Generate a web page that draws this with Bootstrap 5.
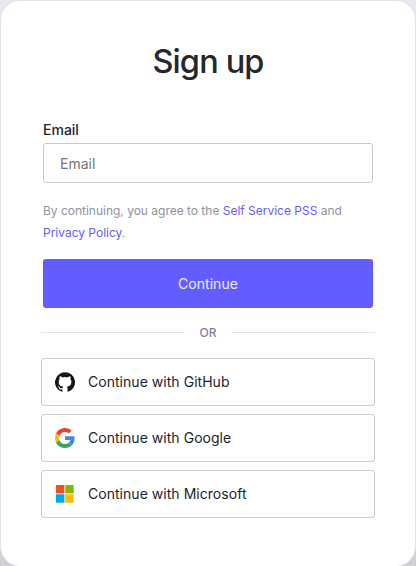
<!DOCTYPE html>
<html lang="en">
<head>
<meta charset="utf-8">
<meta name="viewport" content="width=device-width, initial-scale=1">
<title>Sign up</title>
<link href="https://cdn.jsdelivr.net/npm/bootstrap@5.3.0/dist/css/bootstrap.min.css" rel="stylesheet">
<style>
body{font-family:Inter,sans-serif;background:linear-gradient(#e8eaf0,#d0d1d8);color:#21232c;height:566px;overflow:hidden}
.signup-card{height:566px;border:1px solid #e2e3e5;border-bottom:0;border-radius:20px;padding:37px 40px 0}
h1{font-size:32.5px;line-height:48px;font-weight:500;letter-spacing:-.85px;color:#26272a}
form{margin-top:34px}
.inset{padding:0 2px}
.form-label{font-size:14px;line-height:20px;font-weight:500;color:#242529}
.email-field{height:40px;margin-top:3px;border:1px solid #c9cace;border-radius:3px;padding:0 16px;font-size:14px}
.email-field::placeholder{color:#757575}
.terms{margin-top:17px;font-size:12px;line-height:22px;color:#8e939e;letter-spacing:-.01px}
.terms a{color:#635dff}
.btn-continue{--bs-btn-bg:#635dff;--bs-btn-color:#efefff;--bs-btn-hover-bg:#5650ef;--bs-btn-hover-color:#fff;height:49px;margin-top:15px;border:0;border-radius:3px;font-size:14px;letter-spacing:.05px}
.divider{height:17px;margin:16px 0 17px;font-size:12px;font-weight:500;color:#7f8491}
.or-text{padding:1px 14.4px 0}
.rule{height:1px;background:#e2e3e5}
.btn-provider{height:48px;border:1px solid #c9cace;border-radius:3px;padding:0 13px;font-size:14px;letter-spacing:.035px;color:#21232c;background:#fff}
.btn-provider span{margin-left:13px;padding-bottom:1px}
</style>
</head>
<body>
<main class="card signup-card">
  <h1 class="text-center mb-0">Sign up</h1>
  <form class="inset">
    <label class="form-label d-block mb-0" for="email">Email</label>
    <input class="form-control email-field" id="email" type="email" placeholder="Email">
    <p class="terms mb-0">By continuing, you agree to the <a class="text-decoration-none" href="#">Self Service PSS</a> and <a class="text-decoration-none" href="#">Privacy Policy</a>.</p>
    <button class="btn btn-continue w-100" type="button">Continue</button>
  </form>
  <div class="divider d-flex align-items-center">
    <span class="rule flex-fill"></span><span class="or-text">OR</span><span class="rule flex-fill"></span>
  </div>
  <div class="providers d-grid gap-2">
    <button class="btn btn-provider d-flex align-items-center" type="button">
      <svg width="20" height="20" viewBox="0 0 16 16" fill="#161514"><path d="M8 .2a8 8 0 0 0-2.53 15.59c.4.07.55-.17.55-.38l-.01-1.49c-2.01.37-2.53-.49-2.69-.94-.09-.23-.48-.94-.82-1.13-.28-.15-.68-.52-.01-.53.63-.01 1.08.58 1.23.82.72 1.21 1.87.87 2.33.66.07-.52.28-.87.51-1.07-1.78-.2-3.64-.89-3.64-3.95 0-.87.31-1.59.82-2.15-.08-.2-.36-1.02.08-2.12 0 0 .67-.21 2.2.82a7.4 7.4 0 0 1 4 0c1.53-1.04 2.2-.82 2.2-.82.44 1.1.16 1.92.08 2.12.51.56.82 1.27.82 2.15 0 3.07-1.87 3.75-3.65 3.95.29.25.54.73.54 1.48l-.01 2.2c0 .21.15.46.55.38A8 8 0 0 0 8 .2"/></svg>
      <span>Continue with GitHub</span>
    </button>
    <button class="btn btn-provider d-flex align-items-center" type="button">
      <svg width="20" height="20" viewBox="0 0 48 48"><path fill="#ea4335" d="M24 9.5c3.54 0 6.71 1.22 9.21 3.6l6.85-6.85C35.9 2.38 30.47 0 24 0 14.62 0 6.51 5.38 2.56 13.22l7.98 6.19C12.43 13.72 17.74 9.5 24 9.5z"/><path fill="#4285f4" d="M46.98 24.55c0-1.57-.15-3.09-.38-4.55H24v9.02h12.94c-.58 2.96-2.26 5.48-4.78 7.18l7.73 6c4.51-4.18 7.09-10.36 7.09-17.65z"/><path fill="#fbbc05" d="M10.53 28.59A14.5 14.5 0 0 1 9.77 24c0-1.6.27-3.14.76-4.59l-7.98-6.19A24 24 0 0 0 0 24c0 3.88.92 7.54 2.56 10.78z"/><path fill="#34a853" d="M24 48c6.48 0 11.93-2.13 15.89-5.81l-7.73-6C30.01 37.64 27.24 38.5 24 38.5c-6.26 0-11.57-4.22-13.47-9.91l-7.98 6.19C6.51 42.62 14.62 48 24 48z"/></svg>
      <span>Continue with Google</span>
    </button>
    <button class="btn btn-provider d-flex align-items-center" type="button">
      <svg width="20" height="20" viewBox="0 0 20 20"><path fill="#f25022" d="M1 1h8.4v8.4H1z"/><path fill="#7fba00" d="M10.3 1h8.4v8.4h-8.4z"/><path fill="#00a4ef" d="M1 10.3h8.4v8.4H1z"/><path fill="#ffb900" d="M10.3 10.3h8.4v8.4h-8.4z"/></svg>
      <span>Continue with Microsoft</span>
    </button>
  </div>
</main>
<script src="https://cdn.jsdelivr.net/npm/bootstrap@5.3.0/dist/js/bootstrap.bundle.min.js"></script>
</body>
</html>
